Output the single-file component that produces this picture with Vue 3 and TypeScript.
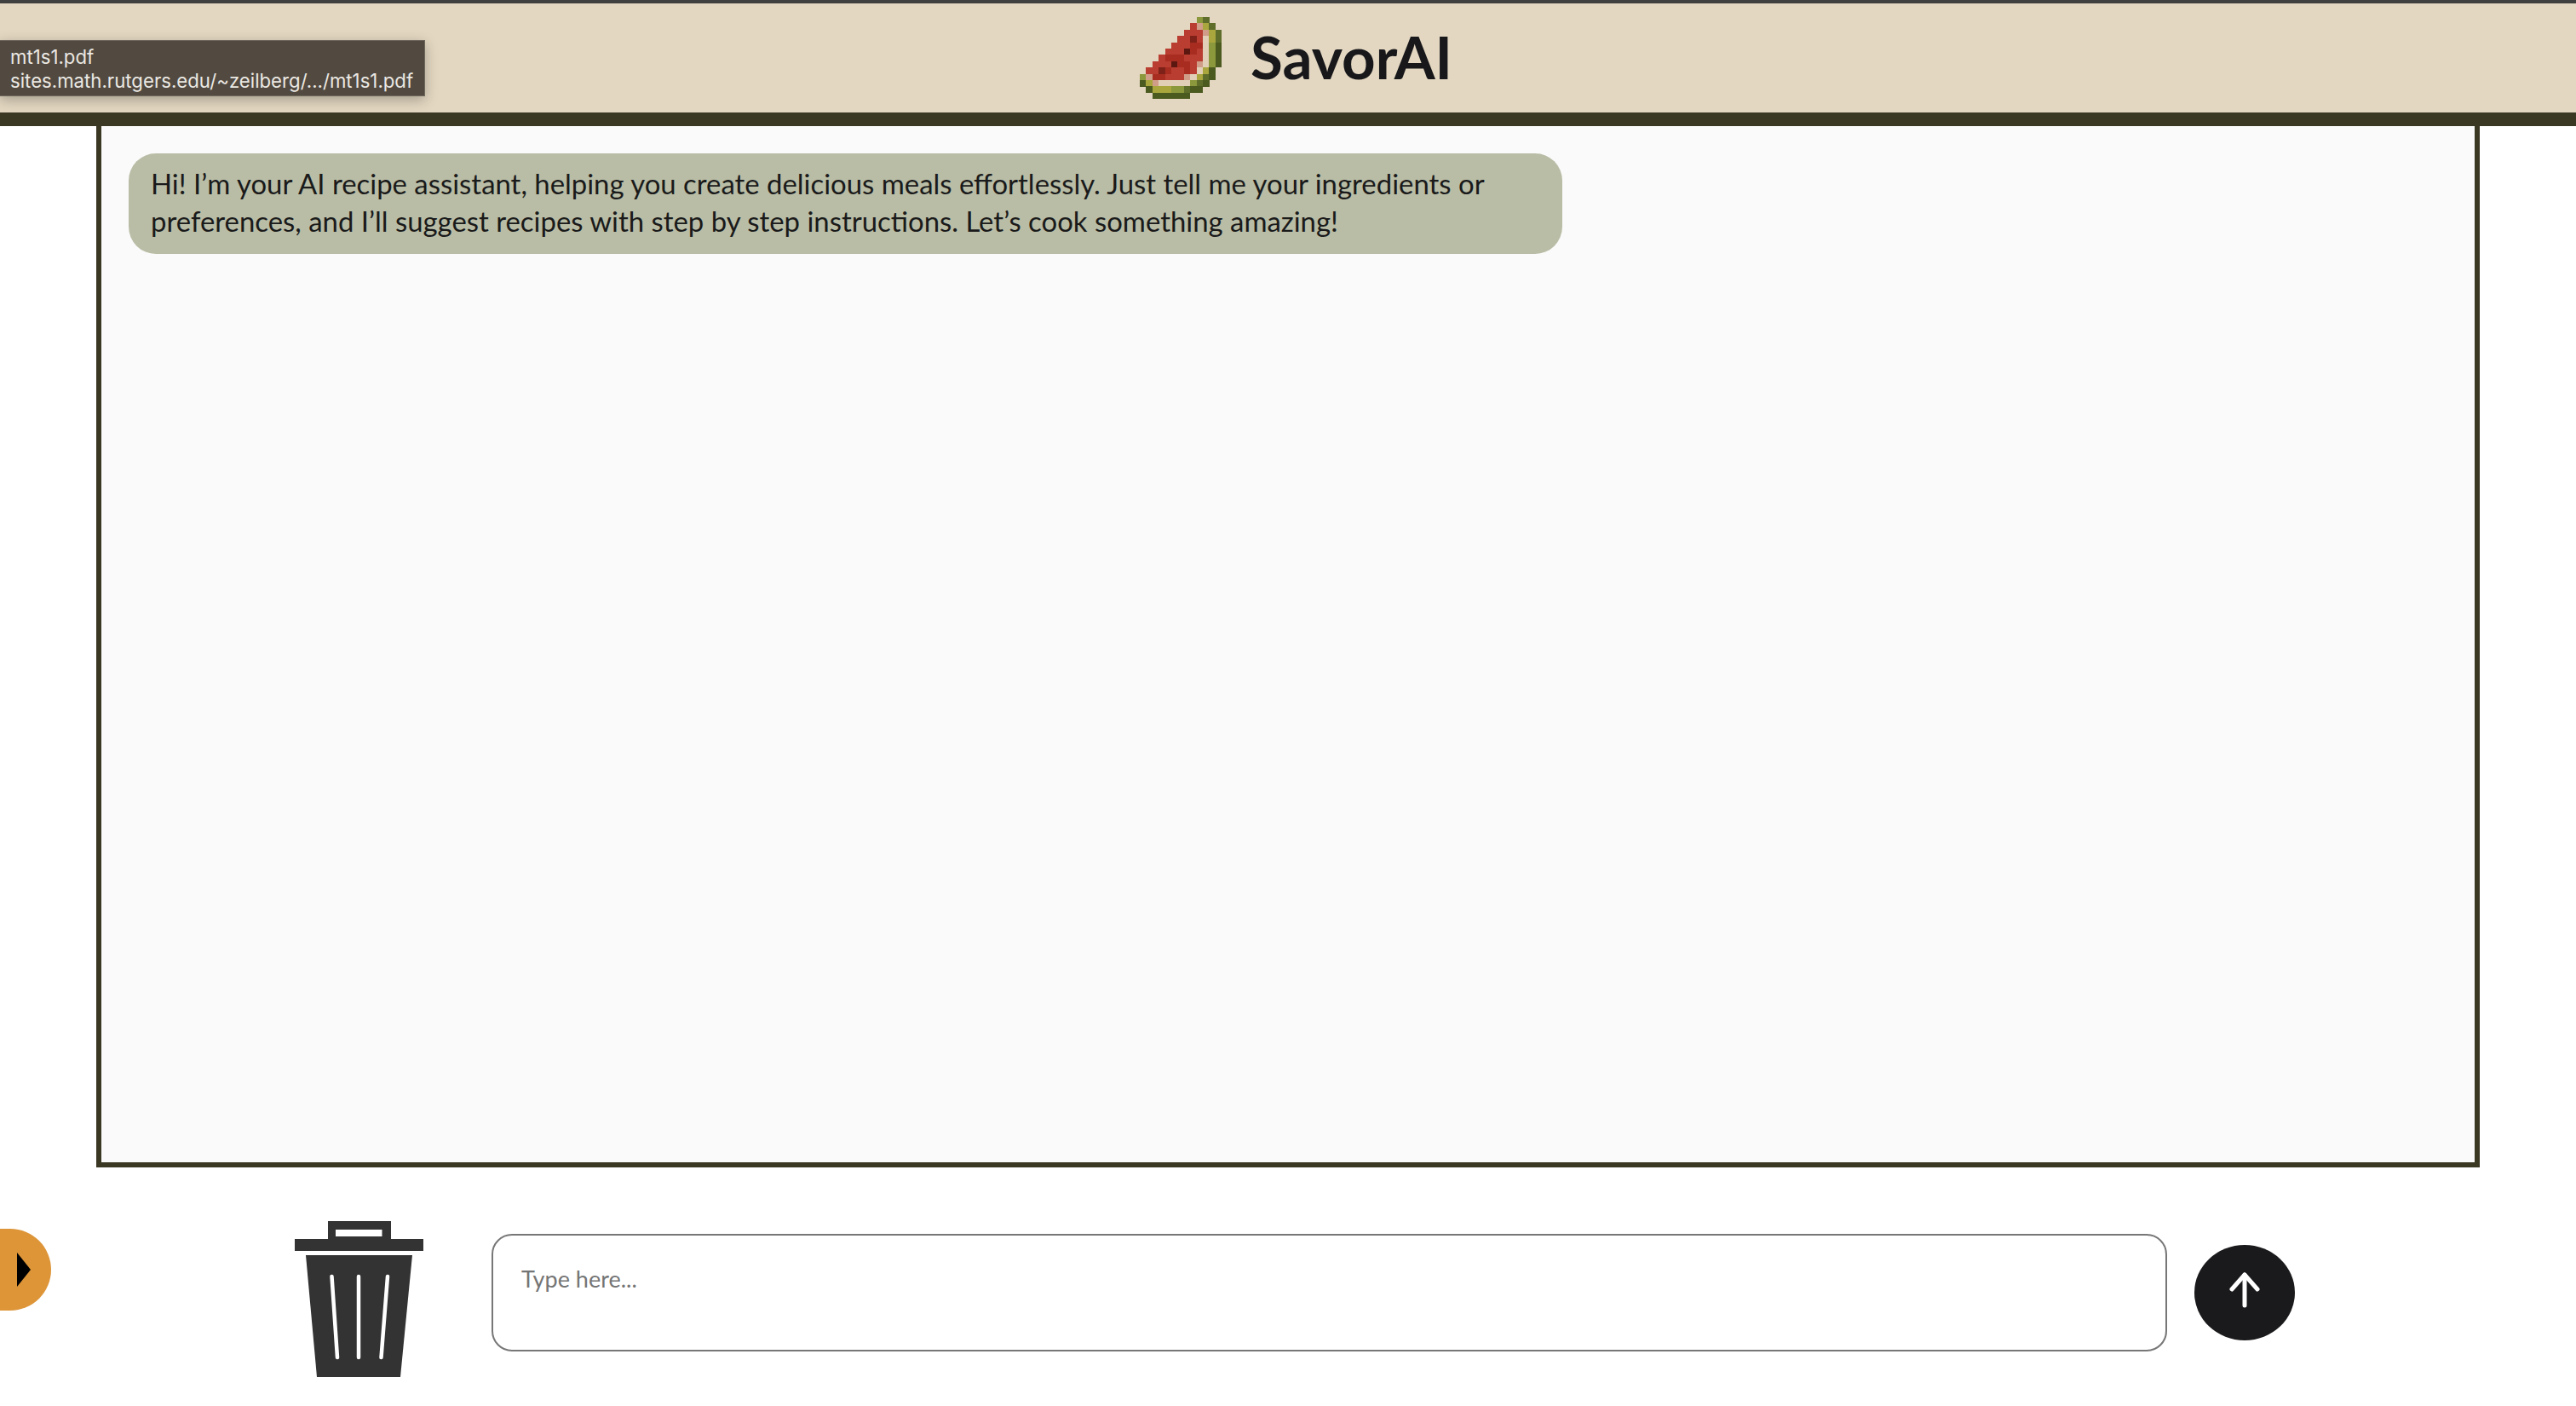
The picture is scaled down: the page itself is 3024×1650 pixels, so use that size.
<script setup lang="ts">
const cell = 7.4

const palette: Record<string, string> = {
  r: '#b93d30',
  R: '#a92c20',
  s: '#5c1710',
  d: '#7e2118',
  p: '#cf9d88',
  c: '#e1cfb8',
  y: '#a9a63d',
  o: '#8b983b',
  g: '#5f6d2b',
  k: '#4b5a1f'
}

const melon = [
  '.........og..',
  '........rpyg.',
  '.......rrrpyg',
  '......rrdrcyg',
  '.....rrrRRcok',
  '....rrrsRrcok',
  '...rRRRrrrcok',
  '..rrrsRRrpcok',
  '.rrdRrrRrcyk.',
  'opRRrrrpcygk.',
  'kypcccccogk..',
  '.kyyyoogkk...',
  '..kkkkkk.....'
]

const pixels = melon.flatMap((row, y) =>
  row.split('').flatMap((c, x) => (c === '.' ? [] : [{ x, y, fill: palette[c] }]))
)
</script>

<template>
  <div class="page">
    <header class="header">
      <svg class="logo" :width="13 * cell" :height="13 * cell" viewBox="0 0 13 13" shape-rendering="crispEdges">
        <rect
          v-for="p in pixels"
          :key="`${p.x}-${p.y}`"
          :x="p.x"
          :y="p.y"
          width="1.02"
          height="1.02"
          :fill="p.fill"
        />
      </svg>
      <h1 class="title">SavorAI</h1>
    </header>

    <div class="link-tip">
      <div>mt1s1.pdf</div>
      <div>sites.math.rutgers.edu/~zeilberg/.../mt1s1.pdf</div>
    </div>

    <main class="chat">
      <div class="bubble">
        Hi! I’m your AI recipe assistant, helping you create delicious meals effortlessly. Just tell me your ingredients or preferences, and I’ll suggest recipes with step by step instructions. Let’s cook something amazing!
      </div>
    </main>

    <div class="composer">
      <button class="trash" aria-label="Clear chat">
        <svg width="151" height="183" viewBox="0 0 151 183">
          <path
            fill="#333"
            fill-rule="evenodd"
            d="M39 0H113V21H151V35H0V21H39ZM48 10V18H102.500V10Z"
          />
          <path fill="#333" d="M13 40H138L124 183H26Z" />
          <g stroke="#fff" stroke-width="4.500" stroke-linecap="round" fill="none">
            <path d="M43.500 65L50 160" />
            <path d="M75 65V160" />
            <path d="M109 65L101.500 160" />
          </g>
        </svg>
      </button>
      <textarea class="prompt" placeholder="Type here..."></textarea>
      <button class="send" aria-label="Send">
        <svg width="36" height="42" viewBox="0 0 36 42" fill="none" stroke="#fff" stroke-width="5" stroke-linecap="round" stroke-linejoin="round">
          <path d="M18 3V39" />
          <path d="M3 20L18 3L33 20" />
        </svg>
      </button>
    </div>

    <button class="side-tab" aria-label="Open sidebar">
      <span class="side-arrow"></span>
    </button>
  </div>
</template>

<style>
body {
  margin: 0;
  background: #fff;
}
</style>

<style scoped>
.page {
  position: relative;
  width: 3024px;
  height: 1650px;
  overflow: hidden;
  display: flex;
  flex-direction: column;
  font-family: "Lato", "Noto Sans", sans-serif;
  color: #18181b;
}

.header {
  box-sizing: border-box;
  height: 148px;
  flex: none;
  display: flex;
  align-items: center;
  justify-content: center;
  gap: 34px;
  padding-left: 19px;
  background: #e3d7c1;
  border-top: 4px solid #404040;
  border-bottom: 16px solid #3a3723;
}

.title {
  margin: 0 0 3px;
  font-size: 69px;
  font-weight: 700;
  line-height: 1;
}

.link-tip {
  position: absolute;
  left: 0;
  top: 47px;
  box-sizing: border-box;
  width: 499px;
  height: 66px;
  padding: 5px 12px;
  background: #524a40;
  border: 1px solid #6d675c;
  border-left: none;
  box-shadow: 0 4px 14px rgba(0, 0, 0, 0.28);
  font-family: "Inter", "Liberation Sans", sans-serif;
  font-size: 22.2px;
  line-height: 28px;
  color: #ebe8e3;
  white-space: nowrap;
}

.chat {
  box-sizing: border-box;
  flex: none;
  height: 1222px;
  margin: 0 113px;
  padding: 32px;
  background: #fafafa;
  border: 6px solid #3a3723;
  border-top: none;
}

.bubble {
  box-sizing: border-box;
  width: 1683px;
  height: 118px;
  padding: 14px 26px;
  background: #b9bda6;
  border-radius: 32px;
  font-size: 32.9px;
  line-height: 44px;
  color: #1a1a1a;
}

.composer {
  display: flex;
  align-items: flex-start;
  padding: 63px 0 0 346px;
}

.trash {
  padding: 0;
  border: none;
  background: none;
  line-height: 0;
}

.prompt {
  box-sizing: border-box;
  width: 1967px;
  height: 138px;
  margin: 15px 0 0 80px;
  padding: 33px 33px;
  border: 2px solid #777;
  border-radius: 24px;
  outline: none;
  resize: none;
  background: #fff;
  font-family: "Lato", "Noto Sans", sans-serif;
  font-size: 27px;
  line-height: 36px;
}

.prompt::placeholder {
  color: #757575;
  opacity: 1;
}

.send {
  width: 118px;
  height: 112px;
  margin: 28px 0 0 32px;
  padding: 0 0 6px;
  display: flex;
  align-items: center;
  justify-content: center;
  border: none;
  border-radius: 50%;
  background: #1a1a1c;
}

.side-tab {
  position: absolute;
  left: 0;
  top: 1442px;
  width: 60px;
  height: 96px;
  padding: 0 0 0 20px;
  display: flex;
  align-items: center;
  border: none;
  border-radius: 0 48px 48px 0;
  background: #dd9538;
}

.side-arrow {
  width: 0;
  height: 0;
  border-top: 20px solid transparent;
  border-bottom: 20px solid transparent;
  border-left: 16px solid #000;
}
</style>
